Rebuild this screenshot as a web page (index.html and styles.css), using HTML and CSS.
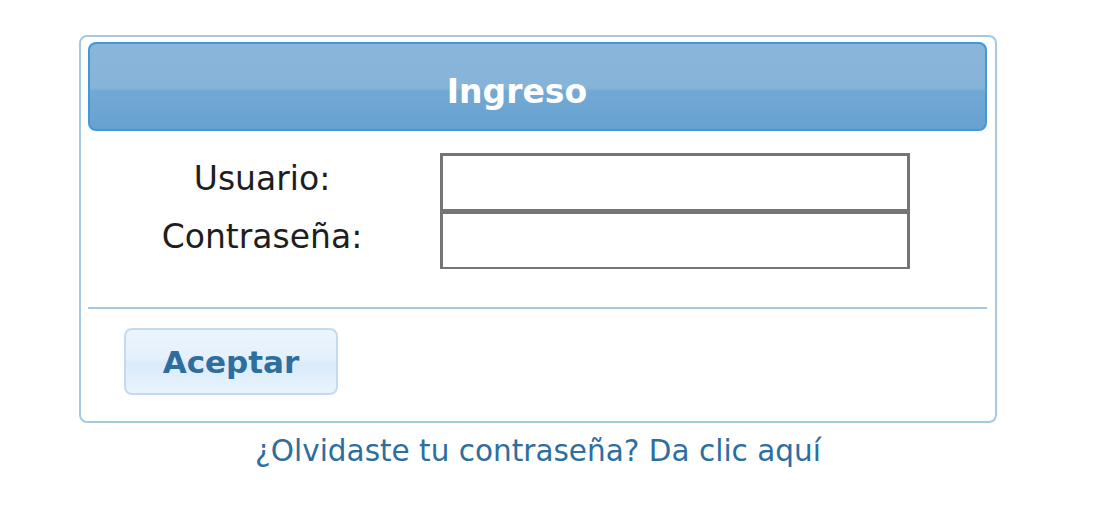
FILE: index.html
```html
<!DOCTYPE html>
<html lang="es">
  <head>
    <meta charset="UTF-8" />
    <title>Ingreso</title>
    <link rel="stylesheet" href="styles.css">
  </head>
  <body>
    <div class="page">
      <form class="dialog" id="loginForm">
        <div class="dialog-title">Ingreso</div>

        <div class="fields">
          <label for="usuario">Usuario:</label>
          <input type="text" id="usuario" name="usuario" />
          <label for="clave">Contraseña:</label>
          <input type="password" id="clave" name="clave" />
        </div>

        <div class="separator"></div>

        <div class="actions">
          <button type="submit" class="btn">Aceptar</button>
        </div>
      </form>

      <div class="forgot">
        <a href="#">¿Olvidaste tu contraseña? Da clic aquí</a>
      </div>
    </div>
  </body>
</html>
```

FILE: styles.css
```css
* {
  box-sizing: border-box;
}

body {
  margin: 0;
  background: #fff;
  font-family: "DejaVu Sans", Verdana, sans-serif;
  color: #1e1e1e;
}

.page {
  width: 918px;
  margin-left: 79px;
  padding-top: 35px;
}

.dialog {
  display: block;
  margin: 0;
  border: 2px solid #a6c9e2;
  border-radius: 8px;
  padding: 5px 8px 26px 7px;
  background: #fff;
}

.dialog-title {
  height: 89px;
  border: 2px solid #4297d7;
  border-radius: 8px;
  background: linear-gradient(#8ab6da 0%, #86b3d8 52%, #72a9d4 55%, #68a2d0 100%);
  color: #fff;
  font-weight: bold;
  font-size: 33px;
  display: flex;
  align-items: center;
  justify-content: center;
  padding: 9px 41px 0 0;
}

.fields {
  margin-top: 22px;
  display: grid;
  grid-template-columns: 348px 470px;
  column-gap: 4px;
}

.fields label {
  font-size: 33px;
  text-align: center;
  align-self: center;
  padding-bottom: 7px;
}

.fields input {
  height: 58px;
  margin: 0;
  border: 2px solid #757575;
  border-width: 3px 3px 2px 3px;
  padding: 0 6px;
  font-size: 20px;
  background: #fff;
}

.separator {
  margin-top: 38px;
  border-top: 2px solid #a6c9e2;
}

.actions {
  padding: 19px 0 0 36px;
}

.btn {
  width: 214px;
  height: 67px;
  border: 2px solid #c5dbec;
  border-radius: 8px;
  background: linear-gradient(#ebf5fd 0%, #e4f0fc 45%, #dbebfa 55%, #e9f4fd 100%);
  color: #2e6e9e;
  font-family: inherit;
  font-weight: bold;
  font-size: 31px;
  cursor: pointer;
  padding: 0;
}

.forgot {
  margin-top: 11px;
  text-align: center;
  font-size: 29.5px;
}

.forgot a {
  color: #2e6e9e;
  text-decoration: none;
}
```
